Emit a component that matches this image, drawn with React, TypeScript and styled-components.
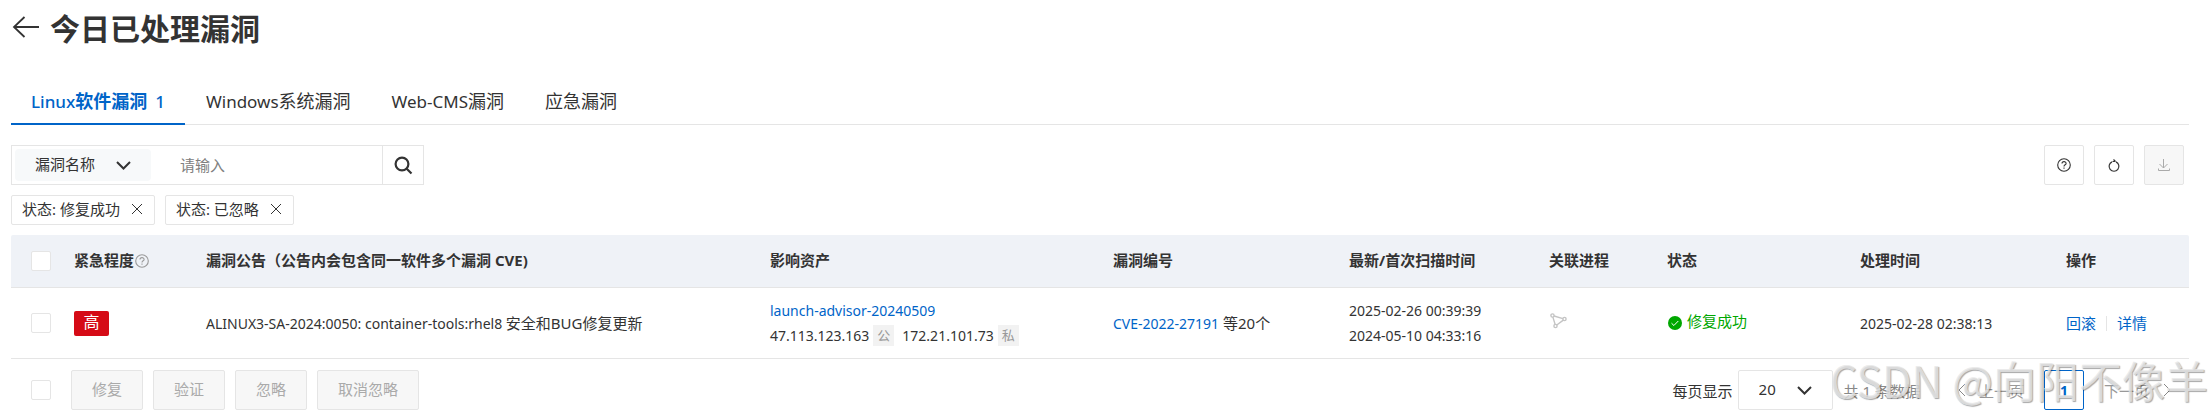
import React from 'react';
import styled, { createGlobalStyle, css } from 'styled-components';

const GlobalStyle = createGlobalStyle`
  * { box-sizing: border-box; }
  body { margin: 0; background: #fff; }
  body, button, input, select {
    font-family: "Noto Sans", "Noto Sans CJK SC", sans-serif;
    font-size: 15px;
    color: #333;
  }
  button { padding: 0; cursor: pointer; }
  button:disabled { cursor: not-allowed; }
`;

const Page = styled.main`
  position: relative;
  padding: 9px 22px 6px 11px;
`;

const Header = styled.header`
  display: flex;
  align-items: center;
  gap: 10px;
  height: 40px;
`;

const BackButton = styled.button`
  display: flex;
  margin-top: -4px;
  border: 0;
  background: none;
`;

const Title = styled.h1`
  margin: 0;
  font-size: 30px;
  line-height: 40px;
  font-weight: 700;
`;

const Tabs = styled.nav`
  display: flex;
  gap: 1px;
  margin-top: 30px;
  box-shadow: inset 0 -1px #e5e5e5;
`;

const Tab = styled.button<{ $active?: boolean }>`
  height: 46px;
  padding: 0 20px;
  border: 0;
  border-bottom: 2px solid ${p => (p.$active ? '#0064c8' : 'transparent')};
  background: none;
  font-size: 18px;
  line-height: 44px;
  color: ${p => (p.$active ? '#0064c8' : '#333')};
  font-weight: ${p => (p.$active ? 700 : 400)};
`;

const TabLatin = styled.span<{ $active?: boolean }>`
  font-size: 17px;
  font-weight: ${p => (p.$active ? 500 : 400)};
`;

const TabCount = styled.span`
  margin-left: 8px;
  font-size: 17px;
  font-weight: 500;
`;

const Toolbar = styled.div`
  display: flex;
  justify-content: space-between;
  margin-top: 20px;
  padding-right: 5px;
`;

const SearchBox = styled.form`
  display: flex;
  align-items: center;
  width: 413px;
  height: 40px;
  padding-left: 3px;
  border: 1px solid #e5e5e5;
`;

const SelectWrap = styled.span<{ $soft?: boolean }>`
  display: grid;
  align-items: center;
  width: ${p => (p.$soft ? 136 : 95)}px;
  height: ${p => (p.$soft ? 32 : 40)}px;
  border: ${p => (p.$soft ? '0' : '1px solid #e5e5e5')};
  border-radius: ${p => (p.$soft ? 4 : 2)}px;
  background: ${p => (p.$soft ? '#f7f9fa' : '#fff')};

  > * { grid-area: 1 / 1; }
  > svg { justify-self: end; margin-right: 20px; pointer-events: none; }
`;

const Select = styled.select`
  appearance: none;
  width: 100%;
  height: 100%;
  padding: 0 20px 2px;
  border: 0;
  background: none;
  outline: none;
`;

const SearchInput = styled.input`
  flex: 1;
  min-width: 0;
  height: 100%;
  padding: 0 29px;
  border: 0;
  outline: none;
  background: none;
  &::placeholder { color: #808080; }
`;

const SearchButton = styled.button`
  display: grid;
  place-items: center;
  width: 41px;
  height: 100%;
  border: 0;
  border-left: 1px solid #e5e5e5;
  background: #fff;
`;

const Group = styled.div`
  display: flex;
  align-items: center;
  gap: 10px;
`;

const disabledLook = css`
  background: #f7f7f7;
  color: #aaa;
`;

const IconButton = styled.button`
  display: grid;
  place-items: center;
  width: 40px;
  height: 40px;
  border: 1px solid #e5e5e5;
  border-radius: 2px;
  background: #fff;
  &:disabled { ${disabledLook} }
`;

const Filters = styled.div`
  display: flex;
  gap: 10px;
  margin-top: 10px;
`;

const FilterTag = styled.span`
  display: flex;
  align-items: center;
  gap: 11px;
  height: 30px;
  padding: 0 11px 2px 10px;
  border: 1px solid #e5e5e5;
  border-radius: 2px;
  line-height: 26px;
`;

const CloseButton = styled.button`
  display: flex;
  border: 0;
  background: none;
`;

const Table = styled.table`
  width: 100%;
  margin-top: 10px;
  table-layout: fixed;
  border-collapse: separate;
  border-spacing: 0;
`;

const Th = styled.th`
  height: 53px;
  padding: 0 0 4px 20px;
  border-bottom: 1px solid #e5e5e5;
  background: #eff2f7;
  text-align: left;
  white-space: nowrap;
  font-weight: 700;
  &:first-child { padding-bottom: 0; border-top-left-radius: 2px; }
  &:last-child { border-top-right-radius: 2px; }
`;

const Td = styled.td`
  height: 71px;
  padding: 0 0 0 20px;
  border-bottom: 1px solid #e5e5e5;
  white-space: nowrap;
  line-height: 25px;
`;

const Checkbox = styled.input.attrs({ type: 'checkbox' })`
  appearance: none;
  display: block;
  width: 20px;
  height: 20px;
  margin: 0;
  border: 1px solid #e5e5e5;
  border-radius: 2px;
  background: #fff;
`;

const ThLabel = styled.span`
  display: flex;
  align-items: center;
  gap: 1px;
  > svg { margin-top: 3px; }
`;

const Severity = styled.span`
  display: block;
  width: 35px;
  height: 25px;
  border-radius: 2px;
  background: #d50b16;
  color: #fff;
  font-size: 16px;
  line-height: 23px;
  text-align: center;
`;

const Latin = styled.span`
  font-size: 14px;
`;

const Link = styled.a`
  color: #0064c8;
  text-decoration: none;
`;

const Line = styled.div`
  display: flex;
  align-items: center;
  height: 25px;
  font-size: 14px;
`;

const IpKind = styled.span`
  width: 21px;
  height: 21px;
  margin: 0 8px 0 4px;
  background: #f2f2f2;
  color: #999;
  font-size: 13px;
  line-height: 20px;
  text-align: center;
`;

const Status = styled.span`
  display: flex;
  align-items: center;
  gap: 5px;
  padding: 0 0 4px 1px;
  color: #00a700;
  > svg { margin-top: 4px; }
`;

const Divider = styled.span`
  width: 1px;
  height: 15px;
  background: #e5e5e5;
`;

const Footer = styled.footer`
  display: flex;
  justify-content: space-between;
  padding: 11px 5px 0 20px;
`;

const Batch = styled(Group)`
  > input { margin-right: 10px; }
`;

const BatchButton = styled.button`
  height: 40px;
  padding: 0 20px 3px;
  border: 1px solid #e5e5e5;
  border-radius: 2px;
  &:disabled { ${disabledLook} }
`;

const Pager = styled.div`
  display: flex;
  align-items: center;
`;

const PageSize = styled.label`
  display: flex;
  align-items: center;
  gap: 5px;
`;

const Total = styled.span`
  margin: 0 24px 0 11px;
  color: #888;
`;

const StepButton = styled.button<{ $next?: boolean }>`
  display: flex;
  align-items: center;
  justify-content: space-between;
  width: 100px;
  height: 40px;
  padding: ${p => (p.$next ? '0 13px 0 20px' : '0 20px 0 14px')};
  border: 0;
  background: none;
  &:disabled { color: #999; }
`;

const PageButton = styled.button`
  width: 40px;
  height: 40px;
  border: 1px solid #0064c8;
  border-radius: 2px;
  background: #fff;
  color: #0064c8;
  font-size: 14px;
  font-weight: 700;
`;

const Watermark = styled.div`
  position: absolute;
  right: 3px;
  bottom: 7px;
  font-family: "Noto Sans CJK SC", sans-serif;
  font-size: 43px;
  line-height: 60px;
  font-weight: 400;
  color: rgba(232, 232, 232, 0.8);
  text-shadow: 1px 1px 1px rgba(0, 0, 0, 0.35);
  white-space: nowrap;
  pointer-events: none;
`;

const Chevron = () => (
  <svg width="15" height="9" viewBox="0 0 15 9" fill="none" stroke="#333" strokeWidth="2">
    <path d="M1 1l6.5 6.5L14 1" />
  </svg>
);

const Question = ({ size, color }: { size: number; color: string }) => (
  <svg width={size} height={size} viewBox="0 0 14 14" fill="none" stroke={color} strokeWidth="1.1">
    <circle cx="7" cy="7" r="6.3" />
    <path d="M5 5.6c0-2.6 4.1-2.5 4.1-.2C9.1 6.8 7 6.7 7 8.4M7 9.6v1.2" />
  </svg>
);

const Close = () => (
  <svg width="12" height="12" viewBox="0 0 12 12" stroke="#333">
    <path d="M1 1l10 10M11 1L1 11" />
  </svg>
);

const Arrow = ({ flip }: { flip?: boolean }) => (
  <svg width="8" height="14" viewBox="0 0 8 14" fill="none" stroke="#888">
    <path d={flip ? 'M1 1l6 6-6 6' : 'M7 1L1 7l6 6'} />
  </svg>
);

const tabs = [
  { latin: 'Linux', label: '软件漏洞', count: 1 },
  { latin: 'Windows', label: '系统漏洞' },
  { latin: 'Web-CMS', label: '漏洞' },
  { latin: '', label: '应急漏洞' },
];

const columnWidths = [43, 132, 564, 343, 236, 200, 118, 193, 206, 143];
const batchActions = ['修复', '验证', '忽略', '取消忽略'];

export default function App() {
  return (
    <Page>
      <GlobalStyle />
      <Header>
        <BackButton aria-label="返回">
          <svg width="29" height="22" viewBox="0 0 29 22" fill="none" stroke="#333" strokeWidth="1.8">
            <path d="M13.5 1L3 11l10.5 10M3 11h25" />
          </svg>
        </BackButton>
        <Title>今日已处理漏洞</Title>
      </Header>

      <Tabs>
        {tabs.map((t, i) => (
          <Tab key={t.label} $active={i === 0}>
            {t.latin && <TabLatin $active={i === 0}>{t.latin}</TabLatin>}
            {t.label}
            {t.count && <TabCount>{t.count}</TabCount>}
          </Tab>
        ))}
      </Tabs>

      <Toolbar>
        <SearchBox onSubmit={e => e.preventDefault()}>
          <SelectWrap $soft>
            <Select aria-label="搜索条件">
              <option>漏洞名称</option>
            </Select>
            <Chevron />
          </SelectWrap>
          <SearchInput aria-label="搜索" placeholder="请输入" />
          <SearchButton aria-label="搜索">
            <svg width="19" height="19" viewBox="0 0 19 19" fill="none" stroke="#333" strokeWidth="2.2">
              <circle cx="8" cy="8" r="6.4" />
              <path d="M12.5 12.5l5 5" />
            </svg>
          </SearchButton>
        </SearchBox>
        <Group>
          <IconButton aria-label="帮助"><Question size={14} color="#333" /></IconButton>
          <IconButton aria-label="刷新">
            <svg width="12" height="13" viewBox="0 0 12 13" fill="none" stroke="#333" strokeWidth="1.2">
              <path d="M4 2.900A4.900 4.900 0 1 0 8 2.900M4.500 2.500h3M5.500 .5l2 2" />
            </svg>
          </IconButton>
          <IconButton aria-label="下载" disabled>
            <svg width="12" height="12" viewBox="0 0 12 12" fill="none" stroke="#aaa">
              <path d="M5.500 0v9M1.500 5l4 4 4-4M.5 9.500v2h11v-2" />
            </svg>
          </IconButton>
        </Group>
      </Toolbar>

      <Filters>
        {['修复成功', '已忽略'].map(name => (
          <FilterTag key={name}>
            <span>状态: {name}</span>
            <CloseButton aria-label="移除"><Close /></CloseButton>
          </FilterTag>
        ))}
      </Filters>

      <Table>
        <colgroup>
          {columnWidths.map((w, i) => <col key={i} width={w} />)}
        </colgroup>
        <thead>
          <tr>
            <Th><Checkbox aria-label="全选" /></Th>
            <Th>
              <ThLabel>紧急程度<Question size={14} color="#999" /></ThLabel>
            </Th>
            <Th>漏洞公告（公告内会包含同一软件多个漏洞 CVE)</Th>
            <Th>影响资产</Th>
            <Th>漏洞编号</Th>
            <Th>最新/首次扫描时间</Th>
            <Th>关联进程</Th>
            <Th>状态</Th>
            <Th>处理时间</Th>
            <Th>操作</Th>
          </tr>
        </thead>
        <tbody>
          <tr>
            <Td><Checkbox aria-label="选择" /></Td>
            <Td><Severity>高</Severity></Td>
            <Td><Latin>ALINUX3-SA-2024:0050: container-tools:rhel8 </Latin>安全和BUG修复更新</Td>
            <Td>
              <Line><Link href="#asset">launch-advisor-20240509</Link></Line>
              <Line>
                47.113.123.163<IpKind>公</IpKind>
                172.21.101.73<IpKind>私</IpKind>
              </Line>
            </Td>
            <Td><Latin><Link href="#cve">CVE-2022-27191</Link></Latin> 等20个</Td>
            <Td>
              <Line>2025-02-26 00:39:39</Line>
              <Line>2024-05-10 04:33:16</Line>
            </Td>
            <Td>
              <svg width="18" height="16" viewBox="0 0 18 16" fill="none" stroke="#c4c4c4" strokeWidth="1.4">
                <circle cx="3.500" cy="2.500" r="1.600" />
                <circle cx="15.500" cy="6" r="1.600" />
                <circle cx="6.500" cy="13" r="1.600" />
                <path d="M5.100 3l8.800 2.600M3.900 4.100l2.200 7.300M7.800 12l6.500-4.900" />
              </svg>
            </Td>
            <Td>
              <Status>
                <svg width="14" height="14" viewBox="0 0 14 14">
                  <circle cx="7" cy="7" r="7" fill="#00a700" />
                  <path d="M3.500 7.200l2.400 2.300 4.400-4.500" fill="none" stroke="#fff" />
                </svg>
                修复成功
              </Status>
            </Td>
            <Td><Latin>2025-02-28 02:38:13</Latin></Td>
            <Td>
              <Group>
                <Link href="#rollback">回滚</Link>
                <Divider />
                <Link href="#detail">详情</Link>
              </Group>
            </Td>
          </tr>
        </tbody>
      </Table>

      <Footer>
        <Batch>
          <Checkbox aria-label="全选本页" />
          {batchActions.map(a => <BatchButton key={a} disabled>{a}</BatchButton>)}
        </Batch>
        <Pager>
          <PageSize>
            每页显示
            <SelectWrap>
              <Select defaultValue="20">
                <option>20</option>
              </Select>
              <Chevron />
            </SelectWrap>
          </PageSize>
          <Total>共 1 条数据</Total>
          <StepButton disabled><Arrow />上一页</StepButton>
          <PageButton>1</PageButton>
          <StepButton $next disabled>下一页<Arrow flip /></StepButton>
        </Pager>
      </Footer>
      <Watermark>CSDN @向阳不像羊</Watermark>
    </Page>
  );
}
